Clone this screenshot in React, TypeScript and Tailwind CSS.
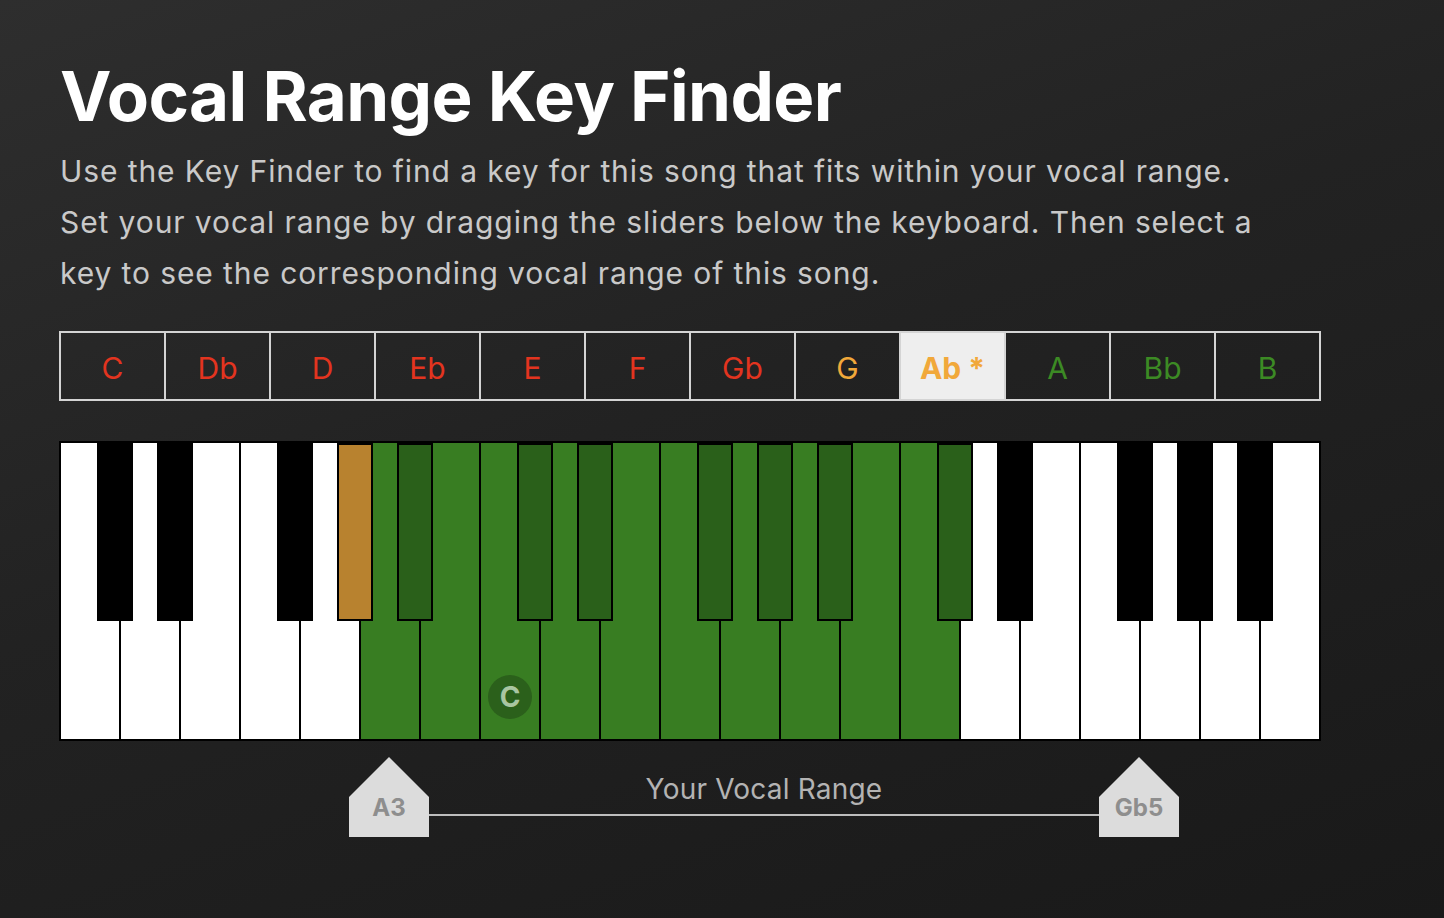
import React from 'react';

type KeyCell = { name: string; color: string; selected?: boolean };

const KEYS: KeyCell[] = [
  { name: 'C', color: 'text-[#e3341f]' },
  { name: 'Db', color: 'text-[#e3341f]' },
  { name: 'D', color: 'text-[#e3341f]' },
  { name: 'Eb', color: 'text-[#e3341f]' },
  { name: 'E', color: 'text-[#e3341f]' },
  { name: 'F', color: 'text-[#e3341f]' },
  { name: 'Gb', color: 'text-[#e3341f]' },
  { name: 'G', color: 'text-[#f1a83a]' },
  { name: 'Ab *', color: 'text-[#f1a83a]', selected: true },
  { name: 'A', color: 'text-[#3c8a24]' },
  { name: 'Bb', color: 'text-[#3c8a24]' },
  { name: 'B', color: 'text-[#3c8a24]' },
];

// 21 white keys, C3 .. B5. song range shown in green
const WHITE_GREEN = new Set([5, 6, 7, 8, 9, 10, 11, 12, 13, 14]);

// black keys indexed by the white-key boundary they sit on
const BLACK_KEYS: { b: number; fill: string }[] = [
  { b: 1, fill: 'bg-black' },
  { b: 2, fill: 'bg-black' },
  { b: 4, fill: 'bg-black' },
  { b: 5, fill: 'bg-[#b8822f]' },
  { b: 6, fill: 'bg-[#2a601a]' },
  { b: 8, fill: 'bg-[#2a601a]' },
  { b: 9, fill: 'bg-[#2a601a]' },
  { b: 11, fill: 'bg-[#2a601a]' },
  { b: 12, fill: 'bg-[#2a601a]' },
  { b: 13, fill: 'bg-[#2a601a]' },
  { b: 15, fill: 'bg-[#2a601a]' },
  { b: 16, fill: 'bg-black' },
  { b: 18, fill: 'bg-black' },
  { b: 19, fill: 'bg-black' },
  { b: 20, fill: 'bg-black' },
];

function Handle({ label }: { label: string }) {
  return (
    <div className="w-[80px] h-[80px] bg-[#dcdcdc] [clip-path:polygon(50%_0,100%_50%,100%_100%,0_100%,0_50%)] flex items-end justify-center pb-[17px]">
      <span className="text-[24px] leading-none font-bold text-[#8e8e8e]">{label}</span>
    </div>
  );
}

export default function App() {
  return (
    <div className="min-h-[918px] w-full bg-[linear-gradient(160deg,#2e2e2e_0%,#222222_45%,#191919_100%)] font-['Inter','Liberation_Sans',sans-serif]">
      <div className="w-[1262px] ml-[59px] pt-[56px]">
        <h1 className="text-[69px] leading-[80px] font-bold tracking-[-0.6px] text-white ml-[1px]">
          Vocal Range Key Finder
        </h1>
        <p className="mt-[10px] text-[30px] leading-[51px] tracking-[0.9px] text-[#c9c9c9] ml-[1px]">
          Use the Key Finder to find a key for this song that fits within your vocal range.
          <br />
          Set your vocal range by dragging the sliders below the keyboard. Then select a
          <br />
          key to see the corresponding vocal range of this song.
        </p>

        {/* key selector */}
        <div className="mt-[32px] flex h-[70px] border-2 border-[#d4d4d4]">
          {KEYS.map((k, i) => (
            <div
              key={k.name}
              className={`flex-1 flex items-center justify-center pt-[4px] text-[30px] ${k.color} ${
                i > 0 ? 'border-l-2 border-[#d4d4d4]' : ''
              } ${k.selected ? 'bg-[#eeeeee] font-bold' : ''}`}
            >
              {k.name}
            </div>
          ))}
        </div>

        {/* keyboard */}
        <div className="mt-[40px] relative h-[300px] border-2 border-black flex bg-white">
          {Array.from({ length: 21 }).map((_, i) => (
            <div
              key={i}
              className={`flex-1 flex flex-col justify-end items-center pb-[20px] ${
                i > 0 ? 'border-l-2 border-black' : ''
              } ${WHITE_GREEN.has(i) ? 'bg-[#387d22]' : 'bg-white'}`}
            >
              {i === 7 && (
                <div className="w-[44px] h-[44px] rounded-full bg-[#2b601b] flex items-center justify-center text-[28px] font-bold text-[#a9c6a1] leading-none">
                  C
                </div>
              )}
            </div>
          ))}
          {BLACK_KEYS.map((k) => (
            <div
              key={k.b}
              className={`absolute top-0 w-[36px] h-[178px] border-2 border-black ${k.fill}`}
              style={{ left: 60 * k.b - 24 }}
            />
          ))}
        </div>

        {/* vocal range sliders */}
        <div className="mt-[16px] flex items-end">
          <div className="w-[290px]" />
          <Handle label="A3" />
          <div className="flex-1 flex flex-col items-center pb-[21px]">
            <span className="text-[28px] leading-[34px] tracking-[0.2px] text-[#b3b3b3] mb-[8px]">Your Vocal Range</span>
            <div className="w-full h-[2px] bg-[#bdbdbd]" />
          </div>
          <Handle label="Gb5" />
          <div className="w-[142px]" />
        </div>
      </div>
    </div>
  );
}
